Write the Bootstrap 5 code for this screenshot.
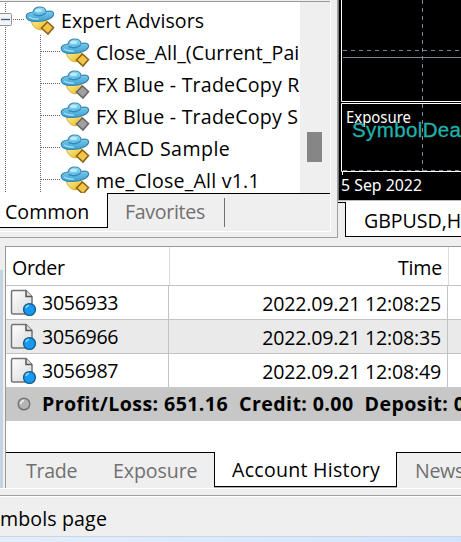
<!DOCTYPE html>
<html lang="en">
<head>
<meta charset="utf-8">
<title>Terminal</title>
<link rel="stylesheet" href="https://cdn.jsdelivr.net/npm/bootstrap@5.3.0/dist/css/bootstrap.min.css">
<style>
body{width:461px;height:542px;overflow:hidden;background:#efefef;color:#000;font:19.6px/32px "Open Sans","Noto Sans",sans-serif;letter-spacing:-.32px;white-space:pre}
.upper{height:239px;white-space:nowrap}
.navigator{width:338px;height:238px;border-right:1px solid #a0a0a0;border-bottom:1px solid #a0a0a0;padding-right:6px}
.navframe{height:231px;border-right:1px solid #fff;border-bottom:1px solid #fff}
.treebox{border-top:1px solid #999;margin-top:1px;height:192px}
.tree{width:300px;background:#fff;height:191px;padding-top:2px}
.trow{height:32px;flex:none;padding-left:25px}
.trow.kid{padding-left:60px}
.trow span{line-height:33px;margin-left:6px;letter-spacing:.1px}
.trow .wide{letter-spacing:.2px}
.trow .wider{letter-spacing:.45px}
.trow svg{margin-top:2px}
.guides{left:0;top:0}
.ea{width:30px;height:30px;flex:none}
.scroller{width:30px;padding:130px 0 0 7px}
.thumb{width:15px;height:30px;background:#868686}
.tab-a{background:#fff;border:1px solid #000;border-top:0;line-height:32px}
.tab-i{color:#707070;border-top:1px solid #000}
.common{width:108px;height:35px;border-left:0;padding-left:5px;padding-top:3px;letter-spacing:0}
.fav{height:35px;padding-left:17px;padding-right:105px;line-height:36px}
.vsep{width:1px;height:29px;background:#707070}
.chartwin{width:123px}
.chart{height:200px;background:#000;border-left:1px solid #777}
.chart text{letter-spacing:0}
.ctabs{height:37px;border-top:1px solid #bbb}
.cstub{width:8px;height:35px;border-top:1px solid #000;border-right:1px solid #000}
.cact{border-bottom:1px solid #000;background:#fff;height:36px;padding-left:18px;line-height:39px;letter-spacing:-.05px}
.terminal{height:242px;margin-top:7px}
.edge{width:3px;height:218px;background:#c5d4e3;margin-top:24px}
.report{width:456px;margin-left:2px;border-left:1px solid #999;border-top:1px solid #999}
.cells{background:#fff;border-bottom:1px solid #c3c3c3;height:34px;flex:none}
.cells.hd{height:39px}
.cells.odd{background:#eaeaea}
.cells.last{border-bottom:0;height:33px}
.c1{width:163px;border-right:1px solid #c3c3c3;padding-left:4px;line-height:34px}
.c1 span{line-height:34px;padding-top:1px}
.c2{width:279px;border-right:1px solid #c3c3c3;padding-right:6px;text-align:right;line-height:35px;letter-spacing:-.2px}
.hd .c1{width:164px;border-color:#ddd;padding-left:6px;line-height:42px}
.hd .c2{border-color:#ddd;line-height:42px}
.doc{width:27px;height:28px;flex:none;margin-right:5px}
.summary{height:34px;background:#c7c7c7;font-weight:700;line-height:36px;padding-left:10px;letter-spacing:.4px}
.summary svg{width:16px;height:16px;margin-right:10px;flex:none}
.blank{height:31px;background:#fff}
.btabs{height:36px}
.btabs .tab-i{height:36px;line-height:35px}
.btabs .tab-a{height:35px;line-height:36px;width:183px;padding-left:17px;box-shadow:0 1px #aaa;letter-spacing:.25px}
.trade{width:89px;padding-left:20px}
.btabs .expo{width:119px;padding-left:18px;letter-spacing:-.1px}
.news{padding-left:18px}
.tabsep{margin-top:4px;box-shadow:0 -4px #efefef,0 -4px #000}
.foot{height:54px;border-top:1px solid #fff}
.status{margin-top:6px;height:41px;border-top:1px solid #a0a0a0;box-shadow:inset 0 1px #fff;line-height:46px;letter-spacing:.12px}
.sky{height:6px;background:linear-gradient(90deg,#e4eefb,#d3e3fb);border-top:1px solid #c8d7e7}
</style>
<script src="https://cdn.jsdelivr.net/npm/bootstrap@5.3.0/dist/js/bootstrap.bundle.min.js"></script>
</head>
<body class="m-0 d-flex flex-column"><svg class="position-absolute" width="0" height="0"><defs>
<linearGradient id="blu" x2="0" y2="1"><stop stop-color="#93dcf5"/><stop offset="1" stop-color="#3c9fd4"/></linearGradient>
<linearGradient id="yel" x2="1" y2="1"><stop stop-color="#fff5a0"/><stop offset="1" stop-color="#e9b51c"/></linearGradient>
<linearGradient id="pap" x2="1" y2="1"><stop stop-color="#fff"/><stop offset="1" stop-color="#d8d8d8"/></linearGradient>
<symbol id="hat" viewBox="0 0 30 30"><path d="M6 13C7 20 10 23 16 24L21 19 22 12Z" fill="url(#yel)" stroke="#d7ae2a"/><path d="M1.200 10.500Q1 7 8 6C9 2 12 1 15 1s6 1.500 6 4.500Q28 4 28.600 7.500C29 12 20 15.500 12 15.500S1.800 14 1.200 10.500Z" fill="url(#blu)" stroke="#3583ac" stroke-width="1.200"/><path d="M8.500 8Q14 12 21 7" fill="none" stroke="#2b88b9" stroke-width="1.200"/><ellipse cx="13.500" cy="4.500" rx="3.500" ry="1.700" fill="#bdeaf8"/><path d="M4 11Q8 13.500 14 13" fill="none" stroke="#a5e2f7" stroke-width="1.200"/></symbol>
<symbol id="gold" viewBox="0 0 30 30"><path d="M22.500 16 28.500 21.500 23 28 16.500 22Z" fill="#f3c64a" stroke="#8b651a" stroke-width="1.600"/></symbol>
<symbol id="gray" viewBox="0 0 30 30"><path d="M22.500 16 28.500 21.500 23 28 16.500 22Z" fill="#a0a0a0" stroke="#666" stroke-width="1.600"/></symbol>
<symbol id="doc" viewBox="0 0 27 28"><path d="M3 1.500H16L22 7.500V25H3Q1.500 25 1.500 23V3Q1.500 1.500 3 1.500Z" fill="url(#pap)" stroke="#757575" stroke-width="1.500"/><path d="M16 1.500V7.500H22" fill="#ddd" stroke="#555" stroke-width="1.500"/><circle cx="19.500" cy="20.500" r="5.900" fill="#159af0" stroke="#145d91" stroke-width="1.400"/><path d="M16 19Q16.500 16.500 19 16.500" fill="none" stroke="#8fd4ff" stroke-width="1.700"/></symbol>
</defs></svg><div class="upper d-flex"><div class="navigator flex-shrink-0"><div class="navframe"><div class="treebox d-flex"><div class="tree position-relative overflow-hidden"><svg class="guides position-absolute" width="92" height="191"><g fill="none" stroke="#666" stroke-dasharray="1 1"><path d="M5.500 1V190M13 17.500H25M40.500 33V190M41 49.500H60M41 81.500H60M41 113.500H60M41 145.500H60M41 177.500H60"/></g><rect x="-4.500" y="11.500" width="16" height="12" rx="1" fill="#f4f4f4" stroke="#929292"/><path d="M1 17.500H10" stroke="#305b9b" stroke-width="1.300"/></svg>
<div class="trow d-flex position-relative"><svg class="ea"><use href="#hat"/><use href="#gold"/></svg><span>Expert Advisors</span></div>
<div class="trow kid d-flex position-relative"><svg class="ea"><use href="#hat"/><use href="#gold"/></svg><span>Close_All_(Current_Pai</span></div>
<div class="trow kid d-flex position-relative"><svg class="ea"><use href="#hat"/><use href="#gray"/></svg><span class="wide">FX Blue - TradeCopy R</span></div>
<div class="trow kid d-flex position-relative"><svg class="ea"><use href="#hat"/><use href="#gray"/></svg><span class="wide">FX Blue - TradeCopy S</span></div>
<div class="trow kid d-flex position-relative"><svg class="ea"><use href="#hat"/><use href="#gold"/></svg><span class="wider">MACD Sample</span></div>
<div class="trow kid d-flex position-relative"><svg class="ea"><use href="#hat"/><use href="#gold"/></svg><span class="wide">me_Close_All v1.1</span></div>
</div><div class="scroller"><div class="thumb"></div></div></div>
<div class="d-flex"><div class="tab-a common">Common</div><div class="tab-i fav d-flex flex-grow-1">Favorites<i class="vsep ms-auto mt-1"></i></div></div></div></div>
<div class="chartwin"><svg class="chart d-block" width="123" height="200" viewBox="339 0 122 200"><g fill="none" stroke="#fff"><path d="M341.500 0V101.500H461M461 103.500H341.500V171.500H461M342.500 171V175"/></g><g fill="none" stroke="#778899"><path d="M343 57.500H461"/><path stroke-dasharray="4 4" d="M343 50.500H461M422.500 0V171M343 170.500H461"/></g><g fill="#fff" font-family="Noto Sans,sans-serif" font-size="15.500"><text x="346" y="123" textLength="65" lengthAdjust="spacingAndGlyphs">Exposure</text><text x="341" y="191" textLength="81" lengthAdjust="spacingAndGlyphs">5 Sep 2022</text></g><text x="352" y="137" fill="#20b2aa" stroke="#20b2aa" stroke-width=".3" font-family="Liberation Sans,sans-serif" font-size="20.500" textLength="109" lengthAdjust="spacing">SymbolDea</text></svg>
<div class="ctabs d-flex"><div class="cstub flex-shrink-0 mt-auto"></div><div class="cact flex-grow-1 overflow-hidden">GBPUSD,H</div></div></div></div><div class="terminal d-flex flex-shrink-0"><div class="edge flex-shrink-0"></div><div class="report d-flex flex-column flex-shrink-0 overflow-hidden"><div class="cells hd d-flex"><div class="c1">Order</div><div class="c2">Time</div></div><div class="cells d-flex"><div class="c1 d-flex align-items-center"><svg class="doc"><use href="#doc"/></svg><span>3056933</span></div><div class="c2">2022.09.21 12:08:25</div></div><div class="cells odd d-flex"><div class="c1 d-flex align-items-center"><svg class="doc"><use href="#doc"/></svg><span>3056966</span></div><div class="c2">2022.09.21 12:08:35</div></div><div class="cells last d-flex"><div class="c1 d-flex align-items-center"><svg class="doc"><use href="#doc"/></svg><span>3056987</span></div><div class="c2">2022.09.21 12:08:49</div></div><div class="summary d-flex align-items-center"><svg viewBox="0 0 16 16"><circle cx="8" cy="8" r="5.800" fill="#b4b4b4" stroke="#777" stroke-width="1.500"/><path d="M4.500 8Q5 5 8 4.500" fill="none" stroke="#eee" stroke-width="1.500"/></svg><span>Profit/Loss: 651.16  Credit: 0.00  Deposit: 0</span></div><div class="blank"></div><div class="btabs d-flex"><div class="tab-i trade flex-shrink-0">Trade</div><i class="vsep tabsep"></i><div class="tab-i expo flex-shrink-0">Exposure</div><div class="tab-a flex-shrink-0">Account History</div><div class="tab-i news flex-shrink-0">News</div></div></div></div><div class="foot"><div class="status">mbols page</div><div class="sky"></div></div></body>
</html>
